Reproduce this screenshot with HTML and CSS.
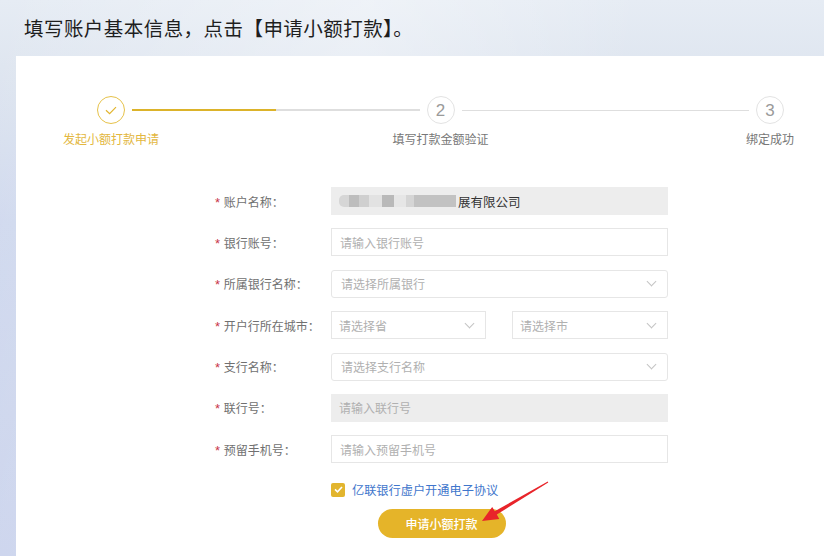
FILE: index.html
```html
<!DOCTYPE html>
<html lang="zh-CN">
<head>
<meta charset="utf-8">
<title>申请小额打款</title>
<link rel="stylesheet" href="styles.css">
</head>
<body>
<header class="top">
  <h1 class="title">填写账户基本信息，点击【申请小额打款】。</h1>
</header>
<main class="panel">
  <div class="steps">
    <div class="circle done">
      <svg width="12" height="9" viewBox="0 0 12 9"><path d="M1 4.2 L4.6 7.6 L11 1.2" fill="none" stroke="#e2b52e" stroke-width="1.2"/></svg>
    </div>
    <div class="line half"></div>
    <div class="circle">2</div>
    <div class="line"></div>
    <div class="circle">3</div>
    <div class="label active c1">发起小额打款申请</div>
    <div class="label c3">填写打款金额验证</div>
    <div class="label c5">绑定成功</div>
  </div>

  <form class="form">
    <div class="row">
      <label class="lbl"><i>*</i> 账户名称：</label>
      <div class="field readonly name">
        <span class="blur b1"></span><span class="blur b2"></span><span class="blur b3"></span><span class="blur b4"></span><span class="blur b5"></span><span class="blur b6"></span><span class="blur b7"></span><span class="blur b8"></span><span class="nm">展有限公司</span>
      </div>
    </div>
    <div class="row">
      <label class="lbl"><i>*</i> 银行账号：</label>
      <div class="field"><span class="ph">请输入银行账号</span></div>
    </div>
    <div class="row">
      <label class="lbl"><i>*</i> 所属银行名称：</label>
      <div class="field select"><span class="ph">请选择所属银行</span><span class="chev"></span></div>
    </div>
    <div class="row">
      <label class="lbl"><i>*</i> 开户行所在城市：</label>
      <div class="pair">
        <div class="field select sq"><span class="ph">请选择省</span><span class="chev"></span></div>
        <div class="field select sq"><span class="ph">请选择市</span><span class="chev"></span></div>
      </div>
    </div>
    <div class="row">
      <label class="lbl"><i>*</i> 支行名称：</label>
      <div class="field select"><span class="ph">请选择支行名称</span><span class="chev"></span></div>
    </div>
    <div class="row">
      <label class="lbl"><i>*</i> 联行号：</label>
      <div class="field readonly"><span class="ph">请输入联行号</span></div>
    </div>
    <div class="row">
      <label class="lbl"><i>*</i> 预留手机号：</label>
      <div class="field"><span class="ph">请输入预留手机号</span></div>
    </div>
    <div class="row agree">
      <span></span>
      <div class="agree-box">
        <span class="checkbox"><svg width="9" height="7" viewBox="0 0 9 7"><path d="M1 3.4 L3.5 5.8 L8 1" fill="none" stroke="#fff" stroke-width="1.6"/></svg></span>
        <span class="agree-text">亿联银行虚户开通电子协议</span>
      </div>
    </div>
    <div class="actions">
      <button type="button" class="btn">申请小额打款</button>
    </div>
  </form>
</main>
<svg class="arrow" width="90" height="55" viewBox="0 0 90 55">
  <polygon points="12,46 22.2,31.9 24.8,36.2 77.75,6.57 78.25,7.43 26.8,39.6 29.3,43.9" fill="#e8242a"/>
</svg>
</body>
</html>
```

FILE: styles.css
```css
html, body {
  margin: 0;
  padding: 0;
}
body {
  width: 824px;
  height: 556px;
  overflow: hidden;
  position: relative;
  font-family: "Noto Sans CJK SC", "Noto Sans", sans-serif;
  background:
    linear-gradient(100deg, rgba(255,255,255,0) 0%, rgba(255,255,255,0.35) 40%, rgba(255,255,255,0) 70%),
    linear-gradient(180deg, #e6ecf4 0%, #dfe6f0 12%, #d0d9ee 40%, #c9d2ec 100%);
  display: flex;
  flex-direction: column;
}
.top {
  height: 56px;
  flex: none;
  display: flex;
  align-items: center;
  padding-left: 24px;
  box-sizing: border-box;
}
.title {
  margin: 0;
  font-size: 19.5px;
  font-weight: normal;
  color: #1e1e1e;
  letter-spacing: 0.45px;
  margin-top: -2px;
  font-family: "Noto Sans CJK SC", serif;
}
.panel {
  flex: 1;
  margin-left: 16px;
  background: #fff;
  padding-top: 40px;
}
.steps {
  display: grid;
  grid-template-columns: 28px 1fr 28px 1fr 28px;
  grid-template-rows: 28px auto;
  row-gap: 7px;
  padding-left: 81px;
  padding-right: 40px;
  align-items: center;
}
.circle {
  width: 28px;
  height: 28px;
  box-sizing: border-box;
  border: 1px solid #e3e3e3;
  border-radius: 50%;
  display: flex;
  align-items: center;
  justify-content: center;
  font-size: 17px;
  color: #9a9a9a;
  font-family: "Liberation Sans", sans-serif;
  line-height: 1;
}
.circle.done {
  border-color: #e6c24a;
}
.line {
  height: 1px;
  background: #dedede;
  margin: 0 7px;
}
.line.half {
  background: linear-gradient(to right, #dcb32a 50%, #dedede 50%);
  height: 1.5px;
}
.label {
  grid-row: 2;
  justify-self: center;
  white-space: nowrap;
  font-size: 12px;
  color: #777;
  line-height: 16px;
}
.label.active { color: #e3b740; }
.c1 { grid-column: 1; }
.c3 { grid-column: 3; }
.c5 { grid-column: 5; }

.form {
  margin: 40px 0 0 197px;
  width: 455px;
  display: flex;
  flex-direction: column;
  gap: 13.4px;
}
.row {
  display: grid;
  grid-template-columns: 118px 337px;
  align-items: center;
  height: 28px;
}
.lbl {
  font-size: 12px;
  color: #707070;
  white-space: nowrap;
  padding-left: 2px;
}
.lbl i {
  font-style: normal;
  color: #c8354a;
  font-family: "Liberation Sans", sans-serif;
  font-size: 13px;
  margin-right: 1px;
}
.field {
  height: 28px;
  box-sizing: border-box;
  border: 1px solid #e6e6e6;
  display: flex;
  align-items: center;
  padding: 0 8px;
  font-size: 12px;
  position: relative;
}
.field.select {
  border-radius: 3px;
  padding-left: 9px;
}
.field.sq { border-radius: 0; padding-left: 7px; }
.field.readonly {
  background: #ededed;
  border-color: #ededed;
  padding-left: 7px;
}
.ph { color: #b0b0b0; }
.chev {
  margin-left: auto;
  width: 6px;
  height: 6px;
  border-right: 1px solid #c4c4c4;
  border-bottom: 1px solid #c4c4c4;
  transform: rotate(45deg);
  margin-top: -4px;
  margin-right: 4px;
}
.pair {
  display: grid;
  grid-template-columns: 155px 156px;
  justify-content: space-between;
}
.name { padding-left: 1px; }
.blur { display: inline-block; height: 12px; }
.b1 { width: 10px; background: #d6d6d6; border-radius: 5px 0 0 5px; }
.b2 { width: 10px; background: #bdbdbd; }
.b3 { width: 10px; background: #cfcfcf; }
.b4 { width: 13px; background: #e2e2e2; }
.b5 { width: 12px; background: #b9b9b9; }
.b6 { width: 12px; background: #e6e6e6; }
.b7 { width: 8px; background: #d5d5d5; }
.b8 { width: 42px; background: #c2c2c2; }
.nm { color: #333; font-size: 12.5px; margin-left: 2px; }

.agree { margin-top: 3px; height: 20px; }
.agree-box {
  display: flex;
  align-items: center;
  gap: 7px;
}
.checkbox {
  width: 14px;
  height: 14px;
  background: #e2b52e;
  border-radius: 2px;
  display: flex;
  align-items: center;
  justify-content: center;
}
.agree-text {
  font-size: 12.2px;
  color: #3f76cc;
}
.actions {
  display: flex;
  justify-content: center;
  margin-top: -4px;
}
.btn {
  width: 128px;
  height: 29px;
  border: none;
  border-radius: 15px;
  background: #e5b429;
  color: #fff;
  font-family: "Noto Sans CJK SC", sans-serif;
  font-size: 12px;
  font-weight: 500;
  margin-left: 2px;
  cursor: pointer;
}
.arrow {
  position: absolute;
  left: 470px;
  top: 475px;
}
```
